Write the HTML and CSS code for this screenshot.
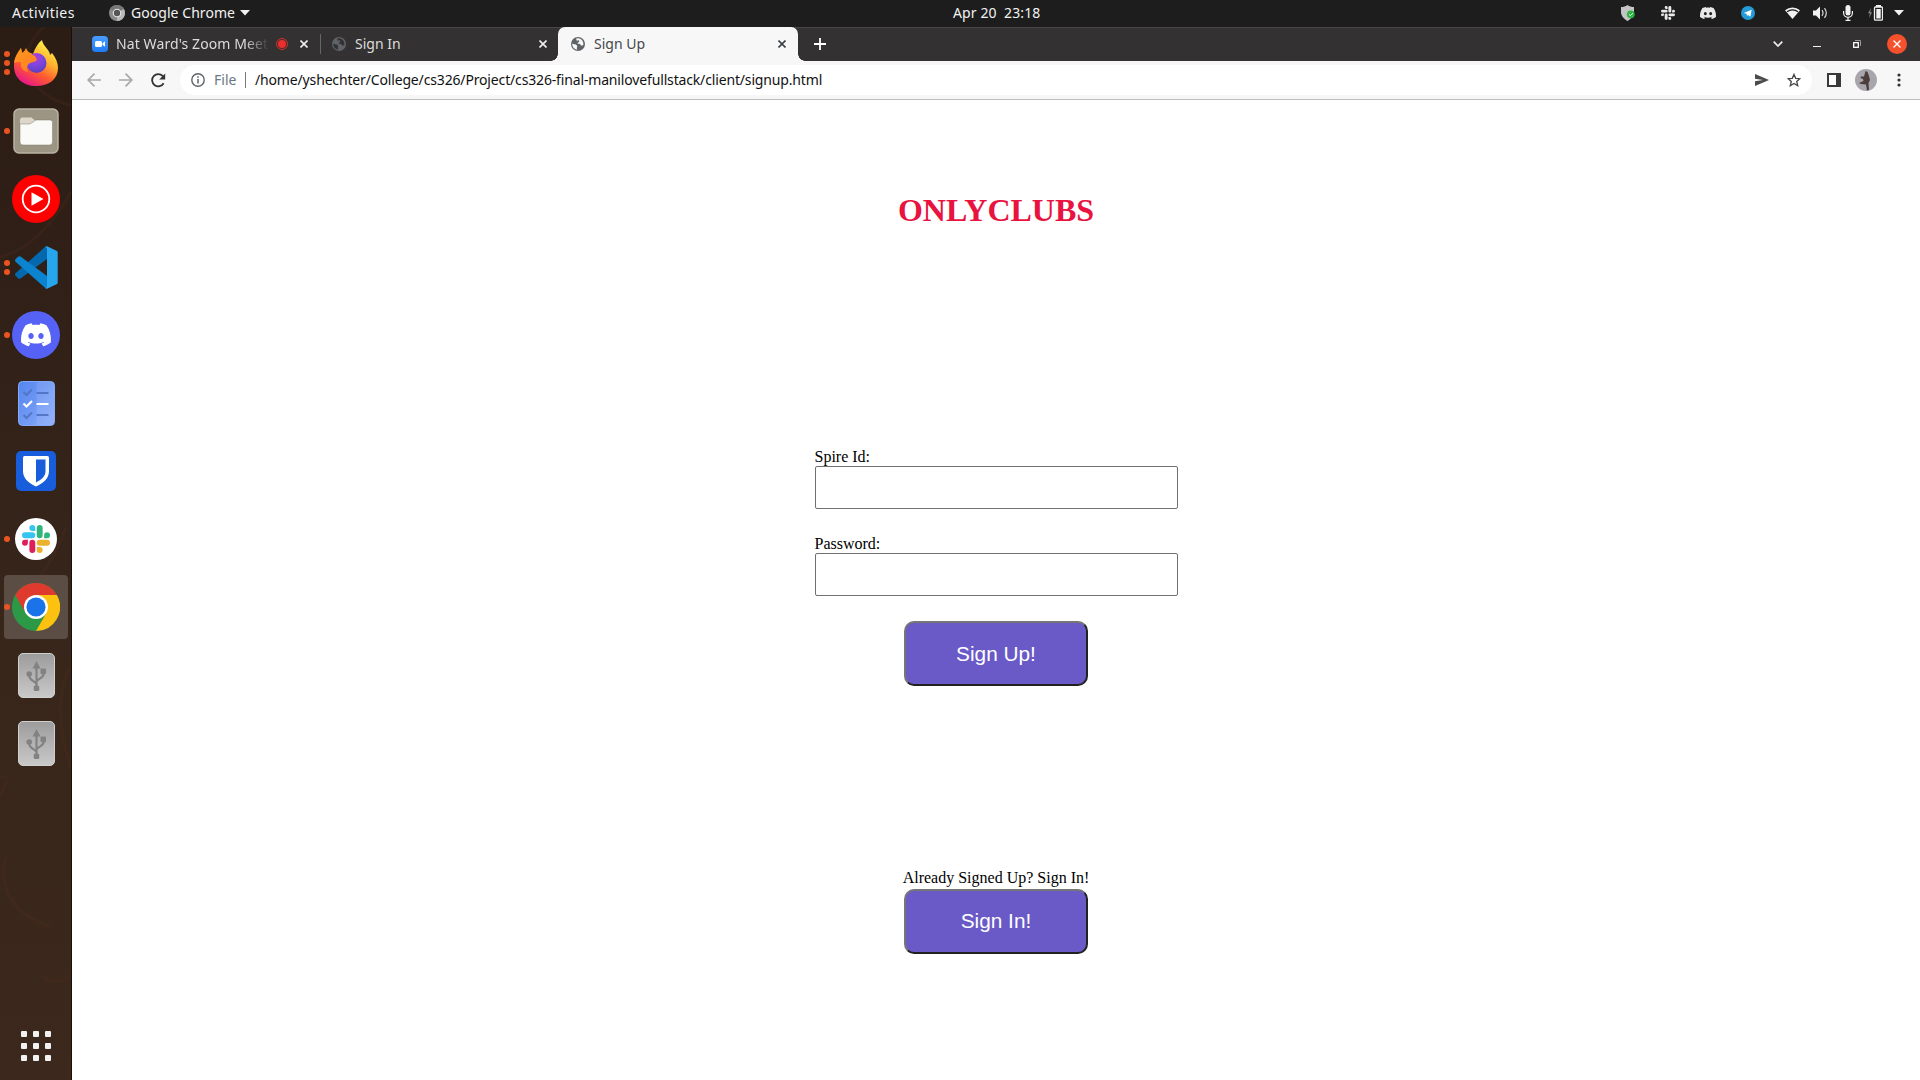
FILE: index.html
```html
<!DOCTYPE html>
<html lang="en">
<head>
<meta charset="utf-8">
<title>Sign Up</title>
<link rel="stylesheet" href="styles.css">
</head>
<body>
<svg class="defs" width="0" height="0" aria-hidden="true">
  <defs>
    <path id="discord" d="M20.317 4.3698a19.7913 19.7913 0 00-4.8851-1.5152.0741.0741 0 00-.0785.0371c-.211.3753-.4447.8648-.6083 1.2495-1.8447-.2762-3.68-.2762-5.4868 0-.1636-.3933-.4058-.8742-.6177-1.2495a.077.077 0 00-.0785-.037 19.7363 19.7363 0 00-4.8852 1.515.0699.0699 0 00-.0321.0277C.5334 9.0458-.319 13.5799.0992 18.0578a.0824.0824 0 00.0312.0561c2.0528 1.5076 4.0413 2.4228 5.9929 3.0294a.0777.0777 0 00.0842-.0276c.4616-.6304.8731-1.2952 1.226-1.9942a.076.076 0 00-.0416-.1057c-.6528-.2476-1.2743-.5495-1.8722-.8923a.077.077 0 01-.0076-.1277c.1258-.0943.2517-.1923.3718-.2914a.0743.0743 0 01.0776-.0105c3.9278 1.7933 8.18 1.7933 12.0614 0a.0739.0739 0 01.0785.0095c.1202.099.246.1981.3728.2924a.077.077 0 01-.0066.1276 12.2986 12.2986 0 01-1.873.8914.0766.0766 0 00-.0407.1067c.3604.698.7719 1.3628 1.225 1.9932a.076.076 0 00.0842.0286c1.961-.6067 3.9495-1.5219 6.0023-3.0294a.077.077 0 00.0313-.0552c.5004-5.177-.8382-9.6739-3.5485-13.6604a.061.061 0 00-.0312-.0286zM8.02 15.3312c-1.1825 0-2.1569-1.0857-2.1569-2.419 0-1.3332.9555-2.4189 2.157-2.4189 1.2108 0 2.1757 1.0952 2.1568 2.419 0 1.3332-.9555 2.4189-2.1569 2.4189zm7.9748 0c-1.1825 0-2.1569-1.0857-2.1569-2.419 0-1.3332.9554-2.4189 2.1569-2.4189 1.2108 0 2.1757 1.0952 2.1568 2.419 0 1.3332-.946 2.4189-2.1568 2.4189Z"/>
    <path id="slack-arm" d="M5.042 15.165a2.528 2.528 0 0 1-2.52 2.523A2.528 2.528 0 0 1 0 15.165a2.527 2.527 0 0 1 2.522-2.52h2.52v2.52zM6.313 15.165a2.527 2.527 0 0 1 2.521-2.52 2.527 2.527 0 0 1 2.521 2.52v6.313A2.528 2.528 0 0 1 8.834 24a2.528 2.528 0 0 1-2.521-2.522v-6.313z"/>
    <g id="globe">
      <circle cx="7" cy="7" r="7"/>
      <path class="land" d="M1.3 6.6C2.6 7.6 4 7 5 7.8s1.600 1.100 1.100 2.100-.4 1.800.3 2.800C3.500 12.800 1 10 1.300 6.600zM5.300 1.500c.4 1-.5 1.700.5 2.100s1.400-.7 2.200 0 .2 1.500-.8 1.800-.6 1.300.4 1.400 1.700.2 2 1.100 1 .9 2.700.2C12.900 5 11 1.500 7.200 1.200 6.500 1.100 5.900 1.300 5.300 1.500z"/>
    </g>
    <g id="usb">
      <rect x="0.500" y="0.500" width="36" height="44" rx="4.500" fill="url(#metal)" stroke="#cfcfcf"/>
      <path d="M18.500 12v25M18.500 31c-1-3-7.500-3-7.500-9.500M18.500 28.500c1-3 7.500-3 7.500-9" fill="none" stroke="#828282" stroke-width="2.200"/>
      <path d="M18.500 8l4 7.500h-8z" fill="#828282"/>
      <circle cx="11.200" cy="21" r="2.800" fill="#828282"/>
      <rect x="22.500" y="15.500" width="5.500" height="5.500" rx="1" fill="#828282"/>
      <rect x="15.700" y="32.500" width="5.600" height="5.500" rx="1.500" fill="#828282"/>
    </g>
    <linearGradient id="metal" x1="0" y1="0" x2="0" y2="1"><stop offset="0" stop-color="#9c9c9c"/><stop offset="1" stop-color="#c9c9c9"/></linearGradient>
    <linearGradient id="flame" x1=".8" y1=".1" x2=".3" y2="1"><stop offset="0" stop-color="#fff04a"/><stop offset=".35" stop-color="#ffb02e"/><stop offset=".65" stop-color="#ff5a2f"/><stop offset="1" stop-color="#e8148c"/></linearGradient>
    <linearGradient id="fox" x1="0" y1="0" x2="1" y2="1"><stop offset="0" stop-color="#ff9a1f"/><stop offset="1" stop-color="#ff7a25"/></linearGradient>
    <radialGradient id="orb" cx=".45" cy=".25" r=".8"><stop offset="0" stop-color="#b23fd8"/><stop offset=".5" stop-color="#7a45e0"/><stop offset="1" stop-color="#5b3fb5"/></radialGradient>
    <linearGradient id="sheet" x1="0" y1="0" x2="1" y2="1"><stop offset="0" stop-color="#5485ee"/><stop offset="1" stop-color="#8aabfb"/></linearGradient>
    <linearGradient id="zoomblue" x1="0" y1="0" x2="0" y2="1"><stop offset="0" stop-color="#4a9dff"/><stop offset="1" stop-color="#1f7cf5"/></linearGradient>
  </defs>
</svg>

<header class="topbar">
  <span class="activities">Activities</span>
  <svg class="app-icon" width="16" height="16" viewBox="0 0 16 16"><circle cx="8" cy="8" r="8" fill="#8b8b8b"/><path d="M8 8L1.100 4A8 8 0 0 1 14.900 4z" fill="#777"/><path d="M8 8l6.900-4A8 8 0 0 1 8 16z" fill="#b9b9b9"/><circle cx="8" cy="8" r="4.300" fill="#e8e8e8"/><circle cx="8" cy="8" r="3.200" fill="#555"/></svg>
  <span class="app-name">Google Chrome</span>
  <svg class="app-caret" width="10" height="6" viewBox="0 0 10 6"><path d="M0 0h10L5 5.500z" fill="#f2f2f2"/></svg>
  <span class="clock">Apr 20&nbsp; 23:18</span>
  <div class="tray">
    <svg class="t-shield" width="15" height="16" viewBox="0 0 15 16"><path d="M6.500 0C8.500 1.500 10.500 2 13 2v5c0 4-3 7-6.500 9C3 14 0 11 0 7V2c2.500 0 4.500-.5 6.500-2z" fill="#c4c4c4"/><circle cx="9.800" cy="9.300" r="3.900" fill="#2eb344"/><path d="M7.900 9.300l1.400 1.400 2.500-2.600" fill="none" stroke="#d8ffe0"/></svg>
    <svg class="t-slack" width="14" height="14" viewBox="0 0 24 24" fill="#e9e9e9"><use href="#slack-arm"/><use href="#slack-arm" transform="rotate(90 12 12)"/><use href="#slack-arm" transform="rotate(180 12 12)"/><use href="#slack-arm" transform="rotate(270 12 12)"/></svg>
    <svg class="t-discord" width="16" height="16" viewBox="0 0 24 24" fill="#e9e9e9"><use href="#discord"/></svg>
    <svg class="t-telegram" width="14" height="14" viewBox="0 0 14 14"><circle cx="7" cy="7" r="7" fill="#229bd6"/><path d="M2.700 6.900l8-3.200-1.300 7-2.400-1.700-1.100 1.100-.3-2.300z" fill="#fff"/></svg>
    <svg class="t-wifi" width="15" height="12" viewBox="0 0 15 12"><path d="M7.500 12L0 3.200a11.500 11.500 0 0 1 15 0z" fill="#f2f2f2"/><path d="M2 4.800a8.800 8.800 0 0 1 11 0" fill="none" stroke="#1d1d1d" stroke-width="1.100"/></svg>
    <svg class="t-sound" width="15" height="14" viewBox="0 0 15 14"><path d="M0 4.500h3L7 .5v13l-4-4H0z" fill="#f2f2f2"/><path d="M9 4.200q2 2.800 0 5.600M11.500 2.200q3.600 4.800 0 9.600" fill="none" stroke="#d8d8d8" stroke-width="1.200"/></svg>
    <svg class="t-mic" width="10" height="16" viewBox="0 0 10 16"><rect x="2.500" y="0" width="5" height="10.500" rx="2.500" fill="#f2f2f2"/><path d="M.6 6v2a4.400 4.400 0 0 0 8.800 0V6M5 12v3M2.500 15.300h5" fill="none" stroke="#f2f2f2" stroke-width="1.200"/></svg>
    <svg class="t-battery" width="15" height="16" viewBox="0 0 15 16"><path d="M3.200 3L0 8.300h2L1 13l3-5.700H2.200z" fill="#8a8a8a"/><rect x="6.500" y="2" width="8" height="13.200" rx="1" fill="none" stroke="#f2f2f2" stroke-width="1.300"/><rect x="8" y="0" width="5" height="2" fill="#f2f2f2"/><rect x="8.300" y="4" width="4.400" height="9.500" fill="#f2f2f2"/></svg>
    <svg class="t-caret" width="10" height="6" viewBox="0 0 10 6"><path d="M0 0h10L5 5.500z" fill="#f2f2f2"/></svg>
  </div>
</header>

<div class="desktop">
  <nav class="dock">
    <svg class="dock-art" width="71" height="1053" viewBox="0 0 71 1053" fill="none" stroke="#4a2a1c" stroke-width="3" opacity=".35"><path d="M44 0C10 30 30 70 71 78M71 165Q40 220 0 230M66 500Q50 550 0 590M70 640Q50 680 71 740M6 830Q-6 880 50 900M0 750l8 0-8 20M42 950q15 10 29-2"/></svg>
    <div class="tile"><span class="dots"><i></i><i></i><i></i></span>
      <svg width="46" height="48" viewBox="0 0 46 48"><path d="M29 1c1 5 4 7 6 10 1 2 2 3 2 5l2-2c4 5 6 10 6 15 0 11-9 18-22 18S1 39 1 27c0-7 3-11 7-18l1 5c2-1 4-2 6-1l5 2c2-6 5-11 9-14z" fill="url(#flame)"/><circle cx="23.500" cy="24" r="10" fill="url(#orb)"/><path d="M1 24C2 17 5 13 8 9l1 5q3-2 4-5c1 3 4 6 9 8l2 4c-2 2-5 2-7 3-3 2-4 5-2 9-6-1-8-6-7-10-3 0-5 0-7 1z" fill="url(#fox)"/></svg></div>
    <div class="tile"><span class="dots"><i></i></span>
      <svg width="46" height="46" viewBox="0 0 46 46"><rect x="1" y="1" width="44" height="44" rx="5" fill="#9d9583" stroke="#b9b3a5" stroke-width="1.500"/><path d="M7 12q0-2.500 2.500-2.500h9l4 3.500v6H7z" fill="#dcd7ca"/><path d="M7 16h10l6-4h14q2.500 0 2.500 2.500V34q0 3-3 3H10q-3 0-3-3z" fill="#fafaf8" stroke="#817a69" stroke-width=".5"/></svg></div>
    <div class="tile"><svg width="48" height="48" viewBox="0 0 48 48"><circle cx="24" cy="24" r="24" fill="#f00"/><circle cx="24" cy="24" r="13.300" fill="none" stroke="#fff" stroke-width="1.800"/><path d="M19.500 17.200v13.600l12-6.800z" fill="#fff"/></svg></div>
    <div class="tile"><span class="dots"><i></i><i></i></span>
      <svg width="43" height="43" viewBox="0 0 43 43"><path d="M32 .5V13L5.500 32.500q-1.300.7-2.500-.3l-2.500-2.500q-1-1.200 0-2.400L30 1z" fill="#0368ad"/><path d="M.5 13.300L3 10.800q1.200-1 2.500-.3L32 30v12.500l-2-.7L.5 15.700q-1-1.200 0-2.400z" fill="#0c83cf"/><path d="M32 .3L42 5q.700.400.700 1.500v30q0 1-.7 1.500L32 42.700q-1.500-.2-2-1 2 .7 2-1.700V3q0-2.400-2-1.700.5-.9 2-1z" fill="#27a6ee"/></svg></div>
    <div class="tile"><span class="dots"><i></i></span>
      <svg width="48" height="48" viewBox="0 0 48 48"><circle cx="24" cy="24" r="24" fill="#5662f6"/><g transform="translate(9 8.800) scale(1.250)" fill="#fff"><use href="#discord"/></g></svg></div>
    <div class="tile"><svg width="37" height="45" viewBox="0 0 37 45"><rect x=".5" y=".5" width="36" height="44" rx="4" fill="url(#sheet)" stroke="#86a8f8"/><path d="M18.500 1H32q4 0 4 4v35q0 4-4 4H18.500z" fill="#fff" opacity=".1"/><path d="M5.500 11l3 3 5.500-5.500M5.500 34l3 3 5.500-5.500M18.500 12h12M18.500 34h12" fill="none" stroke="#5277c7" stroke-width="2"/><path d="M5.500 22.500l3 3 5.500-5.500M18.500 23h12" fill="none" stroke="#fff" stroke-width="2.200"/></svg></div>
    <div class="tile"><svg width="40" height="40" viewBox="0 0 40 40"><rect width="40" height="40" rx="5" fill="#175ddc"/><path d="M8.500 5h23q1.500 0 1.500 1.500V20c0 8-6 12-13 15.500C13 32 7 28 7 20V6.500Q7 5 8.500 5z" fill="#fff"/><path d="M20 8.500h9.500V20c0 5.500-4 8.500-9.500 11.500z" fill="#175ddc"/></svg></div>
    <div class="tile"><span class="dots"><i></i></span>
      <svg width="42" height="42" viewBox="0 0 42 42"><circle cx="21" cy="21" r="21" fill="#fff"/><g transform="translate(7 7) scale(1.167)"><use href="#slack-arm" fill="#e01e5a"/><use href="#slack-arm" fill="#36c5f0" transform="rotate(90 12 12)"/><use href="#slack-arm" fill="#2eb67d" transform="rotate(180 12 12)"/><use href="#slack-arm" fill="#ecb22e" transform="rotate(270 12 12)"/></g></svg></div>
    <div class="tile active"><span class="dots"><i></i></span>
      <svg width="48" height="48" viewBox="0 0 48 48"><circle cx="24" cy="24" r="24" fill="#2c9947"/><path d="M3.200 12A24 24 0 0 1 44.800 12H24L13.600 30z" fill="#df3a2e"/><path d="M44.800 12A24 24 0 0 1 24 48l10.400-18L24 12z" fill="#fcc20f"/><circle cx="24" cy="24" r="12" fill="#fff"/><circle cx="24" cy="24" r="9.600" fill="#1a73e8"/></svg></div>
    <div class="tile"><svg width="37" height="45" viewBox="0 0 37 45"><use href="#usb"/></svg></div>
    <div class="tile"><svg width="37" height="45" viewBox="0 0 37 45"><use href="#usb"/></svg></div>
    <div class="apps"><b></b><b></b><b></b><b></b><b></b><b></b><b></b><b></b><b></b></div>
  </nav>

  <section class="window">
    <div class="tabstrip">
      <div class="tab tab-zoom">
        <svg width="16" height="16" viewBox="0 0 16 16"><rect width="16" height="16" rx="4" fill="url(#zoomblue)"/><rect x="3" y="5" width="7" height="6" rx="1.500" fill="#fff"/><path d="M10.500 7.200L13 5.300v5.400l-2.500-1.900z" fill="#fff"/></svg>
        <span class="tab-title faded">Nat Ward's Zoom Meet</span>
        <svg class="rec" width="12" height="12" viewBox="0 0 12 12"><circle cx="6" cy="6" r="5.500" fill="none" stroke="#d93025"/><circle cx="6" cy="6" r="4" fill="#ea2f2f"/></svg>
        <svg class="close" width="8" height="8" viewBox="0 0 8 8"><path d="M.5.5l7 7M7.500.5l-7 7"/></svg>
      </div>
      <div class="tab tab-idle">
        <svg class="globe-dim" width="14" height="14" viewBox="0 0 14 14"><use href="#globe"/></svg>
        <span class="tab-title">Sign In</span>
        <svg class="close" width="8" height="8" viewBox="0 0 8 8"><path d="M.5.5l7 7M7.500.5l-7 7"/></svg>
      </div>
      <div class="tab tab-active">
        <svg class="globe" width="14" height="14" viewBox="0 0 14 14"><use href="#globe"/></svg>
        <span class="tab-title">Sign Up</span>
        <svg class="close" width="8" height="8" viewBox="0 0 8 8"><path d="M.5.5l7 7M7.500.5l-7 7"/></svg>
      </div>
      <svg class="new-tab" width="12" height="12" viewBox="0 0 12 12"><path d="M6 0v12M0 6h12" stroke="#fff" stroke-width="1.800"/></svg>
      <div class="controls">
        <svg width="10" height="6" viewBox="0 0 10 6"><path d="M.7.7L5 5 9.300.7" fill="none" stroke="#eee" stroke-width="1.700"/></svg>
        <svg class="c-min" width="8" height="6" viewBox="0 0 8 6"><path d="M0 5.500h8" stroke="#f2f2f2"/></svg>
        <svg class="c-max" width="8" height="8" viewBox="0 0 8 8" fill="none"><path d="M2 .5h5.500V6" stroke="#999"/><rect x=".7" y="2.700" width="4.600" height="4.600" stroke="#fff" stroke-width="1.300"/></svg>
        <svg class="c-close" width="20" height="20" viewBox="0 0 20 20"><circle cx="10" cy="10" r="10" fill="#f4512c"/><path d="M6.500 6.500l7 7M13.500 6.500l-7 7" stroke="#fff" stroke-width="1.400"/></svg>
      </div>
    </div>

    <div class="toolbar">
      <svg class="back" width="14" height="14" viewBox="0 0 14 14"><path d="M14 7H1.500M7.500.7L1.200 7l6.300 6.300" fill="none" stroke="#a8a8a8" stroke-width="1.700"/></svg>
      <svg class="forward" width="14" height="14" viewBox="0 0 14 14"><path d="M0 7h12.500M6.500.7L12.800 7l-6.300 6.300" fill="none" stroke="#a8a8a8" stroke-width="1.700"/></svg>
      <svg class="reload" width="15" height="15" viewBox="0 0 15 15"><path d="M12.600 10.200A6.100 6.100 0 1 1 11.800 3.200L13 4.500" fill="none" stroke="#333" stroke-width="1.800"/><path d="M14.200.5v6H8.200z" fill="#333"/></svg>
      <div class="omnibox">
        <svg class="info" width="14" height="14" viewBox="0 0 14 14"><circle cx="7" cy="7" r="6.200" fill="none" stroke="#5f6368" stroke-width="1.400"/><path d="M7 6v4.500M7 3.300v1.500" stroke="#5f6368" stroke-width="1.500"/></svg>
        <span class="scheme">File</span>
        <span class="rule"></span>
        <span class="url">/home/yshechter/College/cs326/Project/cs326-final-manilovefullstack/client/signup.html</span>
        <svg class="send" width="14" height="12" viewBox="0 0 14 12"><path d="M0 0l14 6-14 6V7.300L8 6 0 4.700z" fill="#4a4a4a"/></svg>
        <svg class="star" width="14" height="14" viewBox="0 0 14 14"><path d="M7 1.400l1.700 3.900 4.200.4-3.200 2.800 1 4.200L7 10.500l-3.700 2.200 1-4.200L1.100 5.700l4.200-.4z" fill="none" stroke="#444" stroke-width="1.300"/></svg>
      </div>
      <svg class="panel" width="14" height="14" viewBox="0 0 14 14"><rect width="14" height="14" fill="#3a3a3a"/><rect x="2" y="2" width="7" height="10" fill="#fff"/></svg>
      <svg class="avatar" width="22" height="22" viewBox="0 0 22 22"><circle cx="11" cy="11" r="11" fill="#a8a5ad"/><path d="M10.500 2l2 1 1.500 4 1 4-1.500 3 .5 7-2 .5-1-6-5-.5-2-1 4.500-2-.5-2-2.500-1 .5-1.500 3 0z" fill="#4a3d3b"/></svg>
      <svg class="menu" width="4" height="14" viewBox="0 0 4 14" fill="#333"><circle cx="2" cy="2" r="1.600"/><circle cx="2" cy="7" r="1.600"/><circle cx="2" cy="12" r="1.600"/></svg>
    </div>

    <main class="page">
      <h1>ONLYCLUBS</h1>
      <form class="signup">
        <div class="field"><label for="spire">Spire Id:</label><input id="spire" type="text"></div>
        <div class="field"><label for="pass">Password:</label><input id="pass" type="password"></div>
        <button type="button">Sign Up!</button>
      </form>
      <div class="signin">
        <span>Already Signed Up? Sign In!</span>
        <button type="button">Sign In!</button>
      </div>
    </main>
  </section>
</div>
</body>
</html>
```
FILE: styles.css
```css
* { box-sizing: border-box; }
body { margin: 0; width: 1920px; height: 1080px; overflow: hidden; display: flex; flex-direction: column; background: #fff; }
svg { display: block; flex: none; }
.defs { position: absolute; }

.topbar, .window { font-family: "Noto Sans", sans-serif; }
.topbar { height: 27px; flex: none; display: flex; align-items: center; padding-bottom: 1px; background: #1d1d1d; color: #f2f2f2; font-size: 14px; white-space: nowrap; }
.topbar span { flex: none; line-height: 24px; padding-bottom: 1px; }
.activities { margin-left: 12px; width: 97px; letter-spacing: 0.45px; }
.app-name { margin-left: 6px; width: 109px; letter-spacing: 0.05px; }
.clock { margin-left: 703px; width: 98px; letter-spacing: 0.1px; }
.tray { display: flex; align-items: center; margin-left: 570px; }
.t-slack { margin-left: 25px; }
.t-discord { margin-left: 25px; }
.t-telegram { margin-left: 25px; }
.t-wifi { margin-left: 30px; }
.t-sound { margin-left: 13px; }
.t-mic { margin-left: 15px; }
.t-battery { margin-left: 15px; }
.t-caret { margin-left: 11px; }

.desktop { flex: 1; display: flex; min-height: 0; }
.dock { width: 72px; flex: none; display: flex; flex-direction: column; align-items: center; gap: 4px; padding-top: 4px; position: relative; background: linear-gradient(#2b1c14, #38261b 60%, #3c281d); box-shadow: inset -1px 0 #17100c; }
.dock-art { position: absolute; left: 0; top: 0; }
.tile { width: 64px; height: 64px; flex: none; display: flex; align-items: center; justify-content: center; position: relative; border-radius: 4px; }
.tile.active { background: #5c4d44; }
.dots { position: absolute; left: 0; top: 0; height: 64px; display: flex; flex-direction: column; justify-content: center; gap: 3px; }
.dots i { width: 6px; height: 6px; border-radius: 50%; background: #e95420; }
.apps { margin-top: auto; margin-bottom: 19px; display: grid; grid-template-columns: repeat(3, 6px); gap: 6px; }
.apps b { height: 6px; border-radius: 1px; background: #f2f2f2; }

.window { flex: 1; display: flex; flex-direction: column; min-width: 0; }
.tabstrip { height: 34px; flex: none; display: flex; align-items: center; background: #333132; box-shadow: inset 0 1px #474546; color: #ddd; font-size: 14px; }
.tab { height: 34px; flex: none; display: flex; align-items: center; }
.tab-title { white-space: nowrap; line-height: 22px; }
.tab-zoom { width: 248px; padding-left: 20px; }
.faded { width: 153px; margin-left: 8px; letter-spacing: 0.1px; -webkit-mask-image: linear-gradient(90deg, #000 84%, transparent); mask-image: linear-gradient(90deg, #000 84%, transparent); }
.rec { margin-left: 7px; }
.close { stroke: #f0f0f0; stroke-width: 1.6; fill: none; }
.tab-zoom .close { margin-left: 12px; }
.tab-idle { width: 238px; padding: 0 11px 0 12px; background: linear-gradient(#666, #666) 0 7px / 1px 20px no-repeat; }
.tab-idle .tab-title, .tab-active .tab-title { margin-left: 9px; flex: 1; }
.tab-active { width: 240px; padding: 0 12px 0 13px; background: #f7f7f7; color: #45484c; border-radius: 7px 7px 0 0; position: relative; }
.tab-active::before, .tab-active::after { content: ""; position: absolute; bottom: 0; width: 7px; height: 7px; }
.tab-active::before { left: -7px; background: radial-gradient(circle at 0 0, transparent 6.5px, #f7f7f7 7px); }
.tab-active::after { right: -7px; background: radial-gradient(circle at 100% 0, transparent 6.5px, #f7f7f7 7px); }
.tab-active .close { stroke: #3c4043; }
.globe, .globe-dim { fill: #5f6368; }
.globe-dim { --land: #333132; }
.land { fill: var(--land, #f7f7f7); }
.new-tab { margin-left: 16px; }
.controls { margin-left: auto; margin-right: 13px; display: flex; align-items: center; }
.c-min { margin-left: 30px; }
.c-max { margin-left: 32px; }
.c-close { margin-left: 26px; }

.toolbar { height: 39px; flex: none; display: flex; align-items: center; background: #f7f7f7; border-bottom: 1px solid #bdbdbd; font-size: 14px; }
.back { margin-left: 15px; }
.forward { margin-left: 18px; }
.reload { margin-left: 18px; }
.omnibox { width: 1632px; height: 30px; flex: none; margin-left: 14px; display: flex; align-items: center; background: #fff; border-radius: 15px; white-space: nowrap; }
.info { margin-left: 11px; }
.scheme { margin-left: 9px; width: 31px; padding-bottom: 2px; color: #6b7785; }
.rule { width: 1px; height: 16px; background: #777; }
.url { margin-left: 9px; padding-bottom: 2px; color: #111; letter-spacing: -0.155px; }
.send { margin-left: auto; }
.star { margin-left: 18px; margin-right: 11px; }
.panel { margin-left: 15px; }
.avatar { margin-left: 14px; }
.menu { margin-left: 20px; }

.page { flex: 1; display: flex; flex-direction: column; align-items: center; font-family: "Liberation Serif", "Times New Roman", serif; font-size: 16px; line-height: 18px; color: #000; }
h1 { margin: 92px 0 0; font-size: 32px; line-height: 37px; color: #e8133f; }
.signup { margin-top: 219px; width: 363px; display: flex; flex-direction: column; align-items: center; }
.field { display: flex; flex-direction: column; width: 363px; margin-bottom: 26px; }
.field input { width: 363px; height: 43px; margin: 0; border: 1px solid #707070; border-radius: 2px; background: #fff; }
button { width: 184px; height: 65px; padding: 0; border: 2px solid; border-color: #767676 #212121 #212121 #767676; border-radius: 10px; background: #6a5ac7; color: #fff; font: 20.8px "Liberation Sans", Arial, sans-serif; }
.signup button { margin-top: -1px; }
.signin { margin-top: 183px; display: flex; flex-direction: column; align-items: center; }
.signin button { margin-top: 2px; padding-bottom: 2px; }
```
